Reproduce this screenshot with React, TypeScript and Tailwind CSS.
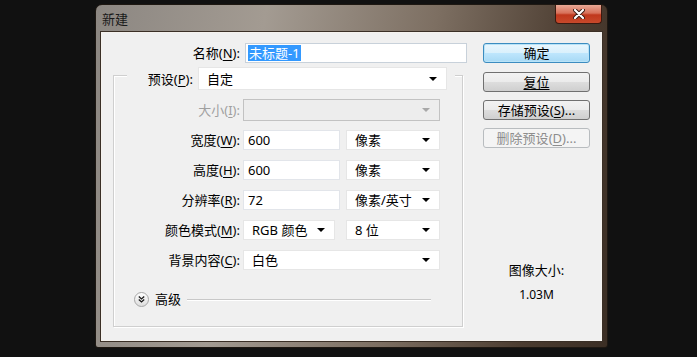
import React from 'react'

// Photoshop "新建" 对话框（Win7 主题）

const font = { fontFamily: '"Noto Sans", "Noto Sans CJK SC", sans-serif' }

function Arrow({ muted = false }: { muted?: boolean }) {
  return (
    <svg width="8" height="4" viewBox="0 0 8 4" className="shrink-0">
      <polygon points="0,0 8,0 4,4" fill={muted ? '#a8a8a8' : '#000'} />
    </svg>
  )
}

function Label({ text, k, w = 'w-[126px]', muted = false }: { text: string; k: string; w?: string; muted?: boolean }) {
  return (
    <div className={`${w} shrink-0 text-right text-[13px] leading-[16px] ${muted ? 'text-[#a0a0a0]' : 'text-black'}`}>
      {text}(<span className="underline underline-offset-2">{k}</span>):
    </div>
  )
}

function Select({ value, w, muted = false }: { value: string; w: string; muted?: boolean }) {
  return (
    <div
      className={`${w} flex h-full items-center justify-between border pl-[8px] pr-[9px] text-[13px] leading-[16px] ${
        muted ? 'border-[#c2c2c2] bg-[#ededed]' : 'border-[#e6e6e6] bg-white'
      }`}
    >
      <span>{value}</span>
      <Arrow muted={muted} />
    </div>
  )
}

function Input({ value, w }: { value: string; w: string }) {
  return (
    <div className={`${w} flex h-full items-center border border-[#e2e5ea] bg-white pl-[4px] text-[13px] leading-[16px]`}>
      {value}
    </div>
  )
}

function Btn({ label, k, rest = '', primary = false, disabled = false, ul = false }: {
  label: string
  k: string
  rest?: string
  primary?: boolean
  disabled?: boolean
  ul?: boolean
}) {
  return (
    <div
      className={`flex h-[20px] w-[107px] items-center justify-center rounded-[3px] border text-[13px] leading-[16px] ${
        disabled
          ? 'border-[#b8bcbf] bg-[#f4f4f4] text-[#8d8d8d]'
          : primary
            ? 'border-[#3c8cc0] bg-[linear-gradient(#eaf6fd_0%,#d9f0fc_50%,#bee6fd_51%,#a7d9f5_100%)] shadow-[inset_0_0_0_1px_#b9e3f7] text-black'
            : 'border-[#707070] bg-[linear-gradient(#f2f2f2_0%,#ebebeb_50%,#dddddd_51%,#cfcfcf_100%)] text-black'
      }`}
    >
      {k ? (
        <span>
          {label}(<span className="underline underline-offset-2">{k}</span>){rest}
        </span>
      ) : (
        <span className={ul ? 'underline underline-offset-2' : ''}>{label}</span>
      )}
    </div>
  )
}

export default function App() {
  return (
    <div className="h-[357px] w-[697px] overflow-hidden bg-[#111111] pl-[95px] pt-[4px]" style={font}>
      <div className="flex h-[344px] w-[513px] flex-col rounded-t-[7px] rounded-b-[3px] border border-[#1e1812] bg-[linear-gradient(100deg,#8c8782_0%,#a39b92_30%,#7d6f62_60%,#4b3c30_85%,#3b2e24_100%)]">
        {/* 标题栏 */}
        <div className="flex h-[27px] shrink-0 items-start justify-between">
          <div className="pl-[6px] pt-[5px] text-[13px] leading-[18px] text-[#1a1a1a]">新建</div>
          <div className="mr-[5px] flex h-[19px] w-[47px] items-center justify-center rounded-b-[4px] border border-t-0 border-[#3b1a10] bg-[linear-gradient(#e9a996_0%,#d7715a_45%,#c0381d_55%,#c8492b_100%)]">
            <svg width="12" height="10" viewBox="0 0 12 10">
              <path d="M2 1 L10 9 M10 1 L2 9" stroke="#3a1a12" strokeWidth="4" strokeLinecap="round" />
              <path d="M2 1 L10 9 M10 1 L2 9" stroke="#fff" strokeWidth="2.2" strokeLinecap="round" />
            </svg>
          </div>
        </div>

        {/* 内容区 */}
        <div className="mx-[5px] flex h-[309px] border border-[#f5f2ee] bg-[#f0f0f0] shadow-[0_0_0_1px_#3a2f26]">
          {/* 左侧表单 */}
          <div className="ml-[11px] flex w-[356px] shrink-0 flex-col">
            <div className="mt-[10px] flex h-[20px] items-center">
              <Label text="名称" k="N" w="w-[127px]" />
              <div className="ml-[5px] flex h-full w-[222px] items-center border border-[#c8d1da] bg-white pl-[2px] text-[13px] leading-[16px]">
                <span className="bg-[#3399ff] px-[1px] text-white">未标题-1</span>
              </div>
            </div>

            {/* 分组框 */}
            <div className="mt-[12px] flex h-[252px] w-[350px] flex-col border border-[#cfcfcf] shadow-[inset_1px_1px_0_#ffffff,1px_1px_0_#ffffff]">
              <div className="-mt-[9px] ml-[13px] flex h-[23px] w-[328px] items-center bg-[#f0f0f0]">
                <Label text="预设" k="P" w="w-[66px]" />
                <div className="ml-[5px] h-full">
                  <Select value="自定" w="w-[249px]" />
                </div>
              </div>

              <div className="mt-[9px] flex h-[22px] items-center">
                <Label text="大小" k="I" muted />
                <div className="ml-[3px] h-full">
                  <Select value="" w="w-[197px]" muted />
                </div>
              </div>

              <div className="mt-[9px] flex h-[20px] items-center">
                <Label text="宽度" k="W" />
                <div className="ml-[3px] h-full"><Input value="600" w="w-[97px]" /></div>
                <div className="ml-[6px] h-full"><Select value="像素" w="w-[94px]" /></div>
              </div>

              <div className="mt-[10px] flex h-[20px] items-center">
                <Label text="高度" k="H" />
                <div className="ml-[3px] h-full"><Input value="600" w="w-[97px]" /></div>
                <div className="ml-[6px] h-full"><Select value="像素" w="w-[94px]" /></div>
              </div>

              <div className="mt-[10px] flex h-[20px] items-center">
                <Label text="分辨率" k="R" />
                <div className="ml-[3px] h-full"><Input value="72" w="w-[97px]" /></div>
                <div className="ml-[6px] h-full"><Select value="像素/英寸" w="w-[94px]" /></div>
              </div>

              <div className="mt-[10px] flex h-[20px] items-center">
                <Label text="颜色模式" k="M" />
                <div className="ml-[3px] h-full"><Select value="RGB 颜色" w="w-[92px]" /></div>
                <div className="ml-[11px] h-full"><Select value="8 位" w="w-[94px]" /></div>
              </div>

              <div className="mt-[10px] flex h-[20px] items-center">
                <Label text="背景内容" k="C" />
                <div className="ml-[3px] h-full"><Select value="白色" w="w-[197px]" /></div>
              </div>

              <div className="ml-[20px] mr-[31px] mt-[21px] flex h-[16px] items-center">
                <svg width="15" height="15" viewBox="0 0 15 15" className="shrink-0">
                  <defs>
                    <linearGradient id="adv" x1="0" y1="0" x2="0" y2="1">
                      <stop offset="0" stopColor="#ffffff" />
                      <stop offset="1" stopColor="#dcdcdc" />
                    </linearGradient>
                  </defs>
                  <circle cx="7.5" cy="7.5" r="7" fill="url(#adv)" stroke="#a6a6a6" />
                  <path d="M4.8 4.6 L7.5 7 L10.2 4.6 M4.8 7.6 L7.5 10 L10.2 7.6" stroke="#1a1a1a" strokeWidth="1.3" fill="none" />
                </svg>
                <span className="ml-[6px] text-[13px] leading-[16px]">高级</span>
                <div className="ml-[6px] h-px flex-1 bg-[#c8c8c8] shadow-[0_1px_0_#ffffff]" />
              </div>
            </div>
          </div>

          {/* 右侧按钮 */}
          <div className="ml-[14px] flex w-[107px] flex-col">
            <div className="mt-[10px]"><Btn label="确定" k="" primary /></div>
            <div className="mt-[9px]"><Btn label="复位" k="" ul /></div>
            <div className="mt-[8px]"><Btn label="存储预设" k="S" rest="..." /></div>
            <div className="mt-[8px]"><Btn label="删除预设" k="D" rest="..." disabled /></div>
            <div className="mt-[114px] text-center text-[13px] leading-[16px]">图像大小:</div>
            <div className="mt-[10px] text-center text-[12px] leading-[14px]">1.03M</div>
          </div>
        </div>
      </div>
    </div>
  )
}
